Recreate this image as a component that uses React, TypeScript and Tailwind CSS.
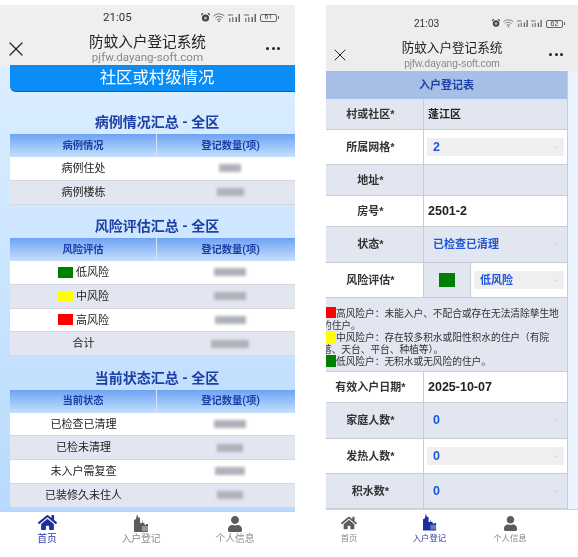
import { ChevronDown, X } from "lucide-react"
import { FaHome, FaUser } from "react-icons/fa"

const caseRows = [
  { label: "病例住处", w: "w-[22px]" },
  { label: "病例楼栋", w: "w-[27px]" },
]

const riskRows = [
  { label: "低风险", color: "bg-[#008000]", w: "w-[32px]" },
  { label: "中风险", color: "bg-[#ffff00]", w: "w-[32px]" },
  { label: "高风险", color: "bg-[#ff0000]", w: "w-[31px]" },
  { label: "合计", color: "", w: "w-[38px]" },
]

const statusRows = [
  { label: "已检查已清理", w: "w-[32px]" },
  { label: "已检未清理", w: "w-[26px]" },
  { label: "未入户需复查", w: "w-[30px]" },
  { label: "已装修久未住人", w: "w-[26px]" },
]

function BuildingIcon({ color, w, h }: { color: string; w: number; h: number }) {
  return (
    <svg width={w} height={h} viewBox="0 0 15 18" fill={color}>
      <path d="M0 18V6l2-1 1-5 1 3 2 1v5h2V6l1 3h1l1 2h1v-1h2v8z" />
      <path d="M8 12h6v5H8z" fill="#ffffff" fillOpacity="0.35" />
    </svg>
  )
}

function StatusIcons({ battery, scale }: { battery: string; scale: number }) {
  const s = scale
  return (
    <div className="flex items-center gap-[3px]">
      {/* alarm */}
      <svg width={9 * s} height={9 * s} viewBox="0 0 9 9">
        <circle cx="4.5" cy="5" r="3.6" fill="#444" />
        <circle cx="4.5" cy="5" r="1.6" fill="#aaa" />
        <path d="M0 2l2-2M9 2L7 0" stroke="#444" strokeWidth="1.2" />
      </svg>
      {/* wifi */}
      <svg width={12 * s} height={9 * s} viewBox="0 0 12 9" fill="none" stroke="#777" strokeWidth="1">
        <path d="M.5 3a8 8 0 0 1 11 0M2.3 5a5.3 5.3 0 0 1 7.4 0M4 6.8a2.8 2.8 0 0 1 4 0" />
        <circle cx="6" cy="8.2" r=".6" fill="#777" />
      </svg>
      {[0, 1].map((i) => (
        <svg key={i} width={13 * s} height={8 * s} viewBox="0 0 13 8" fill="#666">
          <rect x="0" y="0" width="5" height="2" fill="#aaa" />
          <rect x="1" y="4" width="1.5" height="4" fill="#888" />
          <rect x="4" y="3" width="1.5" height="5" fill="#888" />
          <rect x="7.5" y="3" width="1.5" height="5" />
          <rect x="10.5" y="0" width="1.5" height="8" />
        </svg>
      ))}
      <div className="flex items-center gap-[1px]">
        <div className="flex h-[8px] w-[17px] items-center justify-center rounded-[2px] border border-[#666] text-[7px] leading-none text-[#444]">
          {battery}
        </div>
        <span className="h-[3px] w-[1px] bg-[#666]" />
      </div>
    </div>
  )
}

function Header({ time, battery, right }: { time: string; battery: string; right: boolean }) {
  return (
    <header className={right ? "flex h-[66px] flex-col bg-[#ededed] pt-[12px]" : "flex h-[60px] flex-col bg-[#efefef] pt-[6px]"}>
      <div className={right ? "flex h-[13px] items-center pl-[88px] pr-[13px]" : "flex h-[13px] items-center pl-[103px] pr-[16px]"}>
        <span className={right ? "text-[10px] text-[#333]" : "text-[11.5px] text-[#333]"}>{time}</span>
        <div className="ml-auto">
          <StatusIcons battery={battery} scale={right ? 0.9 : 1} />
        </div>
      </div>
      <div className="mt-[9.5px] grid grid-cols-[24px_1fr_24px] items-center px-[4px]">
        <X size={right ? 20 : 24} strokeWidth={1.2} className="text-[#222]" />
        <div className="text-center">
          <div className={right ? "text-[12.6px] leading-[17px] text-[#222]" : "text-[14.6px] leading-[17px] text-[#222]"}>防蚊入户登记系统</div>
          <div className={right ? "text-[10.2px] leading-[13px] text-[#888]" : "text-[11.6px] leading-[13px] text-[#888]"}>pjfw.dayang-soft.com</div>
        </div>
        <div className="flex justify-end gap-[2.5px] pr-[11px]">
          <span className="size-[3px] shrink-0 rounded-full bg-[#222]" />
          <span className="size-[3px] shrink-0 rounded-full bg-[#222]" />
          <span className="size-[3px] shrink-0 rounded-full bg-[#222]" />
        </div>
      </div>
    </header>
  )
}

function BlurValue({ w }: { w: string }) {
  return <div className={`h-[8px] ${w} bg-[#b0b2ba] blur-[1.5px]`} />
}

function SummaryTable({
  title,
  head,
  rows,
}: {
  title: string
  head: string
  rows: { label: string; w: string; color?: string }[]
}) {
  return (
    <section className="ml-[10px]">
      <h3 className="pl-[9px] text-center text-[14px] font-bold leading-[20px] text-[#1c3fa5]">{title}</h3>
      <div className="mt-[2px] grid h-[23px] grid-cols-[147px_1fr] bg-gradient-to-b from-[#6da3f4] to-[#c6e0fd] text-[10.3px] font-bold text-[#1c3fa5]">
        <div className="flex items-center justify-center border-r border-[#d5e6fb]">{head}</div>
        <div className="flex items-center justify-center pl-[9px]">登记数量(项)</div>
      </div>
      {rows.map((row, i) => (
        <div
          key={row.label}
          className={
            i % 2 === 0
              ? "grid h-[23.75px] grid-cols-[147px_1fr] border-b border-[#d6d8dd] bg-white text-[11px] text-[#222]"
              : "grid h-[23.75px] grid-cols-[147px_1fr] border-b border-[#d6d8dd] bg-[#e2e6f0] text-[11px] text-[#222]"
          }
        >
          <div className="flex items-center justify-center gap-[3px]">
            {row.color && <span className={`h-[11px] w-[15px] ${row.color}`} />}
            <span className="pt-[2px]">{row.label}</span>
          </div>
          <div className="flex items-center justify-center pl-[8px]">
            <BlurValue w={row.w} />
          </div>
        </div>
      ))}
    </section>
  )
}

function TabBar({ active, right }: { active: number; right: boolean }) {
  const colorOf = (i: number) => (i === active ? "#1c2fa0" : "#5c5c5c")
  const items = [
    { label: "首页", icon: <FaHome size={right ? 16 : 19} color={colorOf(0)} /> },
    { label: "入户登记", icon: <BuildingIcon color={colorOf(1)} w={right ? 14 : 15} h={18} /> },
    { label: "个人信息", icon: <FaUser size={right ? 15 : 16} color={colorOf(2)} /> },
  ]
  return (
    <nav
      className={
        right
          ? "flex h-[48px] items-start gap-[34.5px] border-t border-[#d5d5d5] bg-white pt-[2px]"
          : "flex h-[46px] items-start border-t border-[#cfcfcf] bg-white pt-[1px]"
      }
    >
      {items.map((item, i) => (
        <div key={item.label} className={right ? "flex w-[46px] flex-col items-center" : "flex w-[94px] flex-col items-center"}>
          <div className="flex h-[19px] items-end">{item.icon}</div>
          <span
            className={`mt-[1px] whitespace-nowrap leading-[12px] ${right ? "text-[8.4px]" : "text-[9.8px]"} ${
              i === active ? "text-[#2b3aa8]" : "text-[#8a8a8a]"
            }`}
          >
            {item.label}
          </span>
        </div>
      ))}
    </nav>
  )
}

function SelectBox({ value, boxed, big }: { value: string; boxed?: boolean; big?: boolean }) {
  return (
    <div className={boxed ? "flex h-[18px] flex-1 items-center justify-between bg-[#efefef] px-[6px]" : "flex h-[18px] flex-1 items-center justify-between px-[6px]"}>
      <span className={big ? "text-[12.5px] font-bold text-[#1f55d8]" : "text-[11px] font-bold text-[#1f55d8]"}>{value}</span>
      <ChevronDown size={5} className="text-[#9aa]" />
    </div>
  )
}

function FormRow({ label, shaded, h, children }: { label: string; shaded?: boolean; h: string; children?: React.ReactNode }) {
  return (
    <div className={`grid ${h} grid-cols-[98px_1fr] border-b border-[#c9ccd4] ${shaded ? "bg-[#e2e6f0]" : "bg-white"}`}>
      <div className="flex items-center justify-center border-r border-[#c9ccd4] pr-[8px] text-[11px] font-bold text-[#333]">{label}</div>
      <div className="flex items-center px-[3px]">{children}</div>
    </div>
  )
}

function Plain({ value, big }: { value: string; big?: boolean }) {
  return <span className={big ? "pl-[1px] text-[12.5px] font-bold text-[#222]" : "pl-[1px] text-[11px] font-bold text-[#222]"}>{value}</span>
}

function Square({ color }: { color: string }) {
  return <span className={`inline-block h-[11.4px] w-[14px] align-[-1px] ${color}`} />
}

function LeftPhone() {
  return (
    <div className="flex h-[552px] w-[295px] flex-col overflow-hidden">
      <Header time="21:05" battery="61" right={false} />
      <main className="flex-1 overflow-hidden bg-gradient-to-b from-[#dceeff] to-[#b7dafe]">
        <div className="ml-[10px] flex h-[27px] items-center justify-center rounded-bl-[6px] border-b border-[#1b5f9c] bg-[#0a8ef5] pl-[9px] text-[16.4px] text-white">
          社区或村级情况
        </div>
        <div className="mt-[20px] flex flex-col gap-[11.5px]">
          <SummaryTable title="病例情况汇总 - 全区" head="病例情况" rows={caseRows} />
          <SummaryTable title="风险评估汇总 - 全区" head="风险评估" rows={riskRows} />
          <SummaryTable title="当前状态汇总 - 全区" head="当前状态" rows={statusRows} />
        </div>
      </main>
      <TabBar active={0} right={false} />
    </div>
  )
}

function RightPhone() {
  return (
    <div className="ml-[31px] flex h-[552px] w-[252px] flex-col overflow-hidden font-['Liberation_Sans','Noto_Sans_CJK_SC',sans-serif]">
      <Header time="21:03" battery="62" right />
      <main className="flex flex-1 overflow-hidden bg-[#eaf3fd]">
        <div className="w-[242px] border-r border-[#c9ccd4]">
          <div className="flex h-[28px] items-center justify-center bg-[#a7bfe6] text-[11px] font-bold text-[#1c3fa5]">入户登记表</div>
          <FormRow label="村或社区*" shaded h="h-[31px]"><Plain value="蓬江区" /></FormRow>
          <FormRow label="所属网格*" h="h-[35px]"><SelectBox value="2" boxed big /></FormRow>
          <FormRow label="地址*" shaded h="h-[31px]" />
          <FormRow label="房号*" h="h-[31px]"><Plain value="2501-2" big /></FormRow>
          <FormRow label="状态*" shaded h="h-[36px]"><SelectBox value="已检查已清理" /></FormRow>
          <div className="grid h-[35px] grid-cols-[98px_47px_1fr] border-b border-[#c9ccd4] bg-white">
            <div className="flex items-center justify-center border-r border-[#c9ccd4] pr-[8px] text-[11px] font-bold text-[#333]">风险评估*</div>
            <div className="flex items-center justify-center border-r border-[#c9ccd4] bg-[#e2e6f0]">
              <span className="h-[14px] w-[16px] bg-[#008000]" />
            </div>
            <div className="flex items-center px-[3px]"><SelectBox value="低风险" boxed /></div>
          </div>
          <div className="h-[74px] overflow-hidden border-b border-[#c9ccd4] bg-[#e2e6f0] pt-[9px] text-[9.7px] leading-[11.4px] text-[#333]">
            <div className="-ml-[4px] w-[243px]">
              <p><Square color="bg-[#ff0000]" />高风险户：未能入户、不配合或存在无法清除孳生地的住户。</p>
              <p><Square color="bg-[#ffff00]" />中风险户：存在较多积水或阳性积水的住户（有院落、天台、平台、种植等）。</p>
              <p><Square color="bg-[#008000]" />低风险户：无积水或无风险的住户。</p>
            </div>
          </div>
          <FormRow label="有效入户日期*" h="h-[31px]"><Plain value="2025-10-07" big /></FormRow>
          <FormRow label="家庭人数*" shaded h="h-[36px]"><SelectBox value="0" big /></FormRow>
          <FormRow label="发热人数*" h="h-[35px]"><SelectBox value="0" boxed big /></FormRow>
          <FormRow label="积水数*" shaded h="h-[35px]"><SelectBox value="0" big /></FormRow>
        </div>
      </main>
      <TabBar active={1} right />
    </div>
  )
}

export default function App() {
  return (
    <div className="flex h-[557px] w-[578px] overflow-hidden bg-white pt-[5px] font-['Roboto','Noto_Sans_CJK_SC',sans-serif] blur-[0.35px]">
      <LeftPhone />
      <RightPhone />
    </div>
  )
}
